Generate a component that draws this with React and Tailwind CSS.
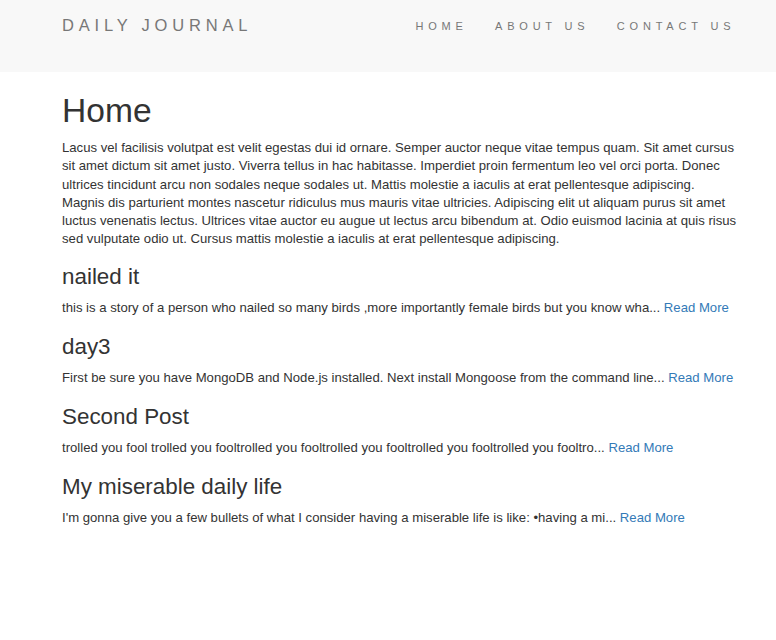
import React from "react"

const posts = [
    {
        title: "nailed it",
        body: "this is a story of a person who nailed so many birds ,more importantly female birds but you know wha...",
    },
    {
        title: "day3",
        body: "First be sure you have MongoDB and Node.js installed. Next install Mongoose from the command line...",
    },
    {
        title: "Second Post",
        body: "trolled you fool trolled you fooltrolled you fooltrolled you fooltrolled you fooltrolled you fooltro...",
    },
    {
        title: "My miserable daily life",
        body: "I'm gonna give you a few bullets of what I consider having a miserable life is like: •having a mi...",
    },
]

export const App = () => {
    return (
        <div className="min-h-screen bg-white text-[#333] font-['Liberation_Sans',Arial,sans-serif]">
            <nav className="h-[72px] bg-[#f8f8f8]">
                <div className="flex h-[51px] items-center justify-between pl-[62px] pr-[27px]">
                    <a href="#" className="text-[16.5px] tracking-[4.8px] text-[#777]">DAILY JOURNAL</a>
                    <ul className="flex pt-[2px]">
                        <li><a href="#" className="block px-[13.7px] text-[11px] tracking-[4.8px] text-[#777]">HOME</a></li>
                        <li><a href="#" className="block px-[13.7px] text-[11px] tracking-[4.8px] text-[#777]">ABOUT US</a></li>
                        <li><a href="#" className="block px-[13.7px] text-[11px] tracking-[4.8px] text-[#777]">CONTACT US</a></li>
                    </ul>
                </div>
            </nav>
            <div className="ml-[62px] w-[678px]">
                <h1 className="mt-[21px] mb-[9.1px] text-[33.6px] leading-[1.1]">Home</h1>
                <p className="mb-[9.1px] text-[13.15px] leading-[18.26px]">
                    Lacus vel facilisis volutpat est velit egestas dui id ornare. Semper auctor neque vitae tempus quam. Sit amet cursus sit amet dictum sit amet justo. Viverra tellus in hac habitasse. Imperdiet proin fermentum leo vel orci porta. Donec ultrices tincidunt arcu non sodales neque sodales ut. Mattis molestie a iaculis at erat pellentesque adipiscing. Magnis dis parturient montes nascetur ridiculus mus mauris vitae ultricies. Adipiscing elit ut aliquam purus sit amet luctus venenatis lectus. Ultrices vitae auctor eu augue ut lectus arcu bibendum at. Odio euismod lacinia at quis risus sed vulputate odio ut. Cursus mattis molestie a iaculis at erat pellentesque adipiscing.
                </p>
                {posts.map((post, i) => (
                    <div key={post.title}>
                        <h3 className={i === 0 ? "mt-[16.5px] mb-[9.1px] text-[22.4px] leading-[1.1]" : "mt-[18px] mb-[9.1px] text-[22.4px] leading-[1.1]"}>{post.title}</h3>
                        <p className="mb-[9.1px] text-[13.15px] leading-[18.26px]">
                            {post.body} <a href="#" className="text-[#337ab7]">Read More</a>
                        </p>
                    </div>
                ))}
            </div>
        </div>
    )
}

export default App
